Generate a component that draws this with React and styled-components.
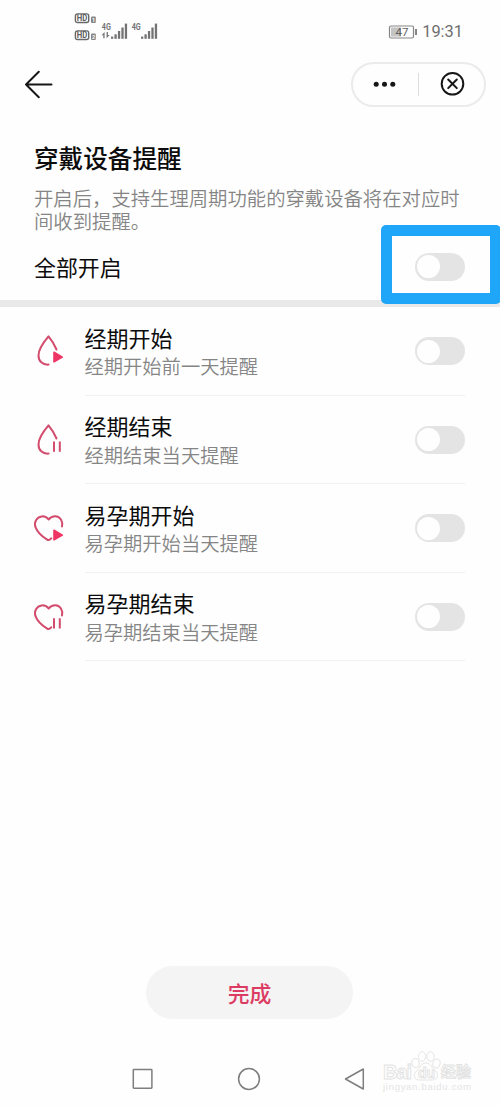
import React from "react";
import styled, { createGlobalStyle } from "styled-components";

const Global = createGlobalStyle`
  *, *::before, *::after { box-sizing: border-box; }
  body { margin: 0; background: #fefefe; }
`;

const Screen = styled.div`
  width: 500px;
  height: 1107px;
  display: flex;
  flex-direction: column;
  overflow: hidden;
  background: #fefefe;
  color: #0c0c0c;
  font-family: "Noto Sans CJK SC", sans-serif;
`;

const StatusBar = styled.header`
  height: 62px;
  flex: none;
  display: flex;
  justify-content: space-between;
  align-items: flex-start;
  padding: 12px 37px 0 74px;
`;

const Signals = styled.svg`
  display: block;
  width: 90px;
  height: 40px;
`;

const StatusRight = styled.div`
  display: flex;
  align-items: center;
  gap: 4px;
  height: 40px;
`;

const Battery = styled.svg`
  display: block;
  width: 30px;
  height: 16px;
`;

const Clock = styled.span`
  color: #6f6f6f;
  font: 400 16.4px/40px Roboto, sans-serif;
`;

const TopBar = styled.nav`
  height: 44px;
  flex: none;
  display: flex;
  align-items: center;
  justify-content: space-between;
  padding: 0 14px 0 24px;
`;

const BackIcon = styled.svg`
  display: block;
  width: 30px;
  height: 30px;
`;

const Capsule = styled.div`
  width: 135px;
  height: 45px;
  border: 2px solid #ebebeb;
  border-radius: 23px;
  display: flex;
  align-items: center;
`;

const CapsuleIcon = styled.svg`
  display: block;
  flex: 1;
  height: 30px;
`;

const CapsuleRule = styled.span`
  width: 1px;
  height: 23px;
  background: #dedede;
`;

const Intro = styled.section`
  height: 194px;
  flex: none;
  padding: 33px 35px 0 34px;
`;

const Title = styled.h1`
  margin: 0;
  font-size: 24.6px;
  line-height: 36px;
  font-weight: 500;
  white-space: nowrap;
`;

const Description = styled.p`
  margin: 12px 0 0;
  width: 430px;
  font-size: 19.35px;
  line-height: 23px;
  font-weight: 350;
  color: #858585;
`;

const AllRow = styled.div`
  height: 67px;
  display: flex;
  align-items: center;
  justify-content: space-between;
  font-size: 21.9px;
`;

const ToggleFrame = styled.div`
  position: relative;
  width: 50px;
  height: 28px;
  &::after {
    content: "";
    position: absolute;
    left: -34px;
    top: -28px;
    width: 120px;
    height: 79px;
    border: 11px solid #1fa6f8;
    border-radius: 5px;
  }
`;

const ToggleTrack = styled.span`
  display: flex;
  align-items: center;
  width: 50px;
  height: 28px;
  padding-left: 2px;
  border-radius: 14px;
  background: #e4e4e4;
  flex: none;
`;

const ToggleKnob = styled.span`
  width: 23px;
  height: 23px;
  border-radius: 50%;
  background: #fefefe;
`;

const SectionBand = styled.div`
  height: 7px;
  flex: none;
  background: #e9e9e9;
`;

const List = styled.ul`
  margin: 0;
  padding: 0 35px 0 34px;
  list-style: none;
`;

const Item = styled.li`
  height: 88.5px;
  display: flex;
  align-items: center;
`;

const ItemIcon = styled.svg`
  display: block;
  width: 32px;
  height: 34px;
  margin-right: 18.5px;
  flex: none;
  overflow: visible;
`;

const ItemBody = styled.div`
  flex: 1;
  height: 100%;
  display: flex;
  align-items: center;
  justify-content: space-between;
  padding-top: 1px;
  border-bottom: 1.5px solid #f1f1f1;
`;

const ItemName = styled.div`
  margin-top: 0.5px;
  font-size: 22px;
  line-height: 29px;
`;

const ItemHint = styled.div`
  margin-top: 1.5px;
  font-size: 19.3px;
  line-height: 27px;
  font-weight: 350;
  color: #858585;
`;

const Footer = styled.footer`
  margin-top: auto;
  height: 141px;
  position: relative;
  display: flex;
  flex-direction: column;
  align-items: center;
`;

const DoneButton = styled.button`
  width: 207px;
  height: 53px;
  margin-right: 1px;
  padding: 0;
  border: 0;
  border-radius: 27px;
  background: #f4f4f4;
  color: #dc3c64;
  font: 500 21.8px/53px "Noto Sans CJK SC", sans-serif;
`;

const SystemNav = styled.div`
  width: 100%;
  margin-top: 47px;
  padding: 0 134px 0 132px;
  display: flex;
  justify-content: space-between;
`;

const NavIcon = styled.svg`
  display: block;
  width: 24px;
  height: 26px;
  fill: none;
  stroke: #7e7e7e;
  stroke-width: 1.5;
  stroke-linejoin: round;
`;

const Watermark = styled.svg`
  position: absolute;
  left: 378px;
  top: 82px;
  width: 110px;
  height: 50px;
  fill: #fefefe;
  stroke: #e2e2e2;
  stroke-width: 0.9;
`;

function Toggle() {
  return (
    <ToggleTrack role="switch" aria-checked="false">
      <ToggleKnob />
    </ToggleTrack>
  );
}

function HdBadge({ y, sim }) {
  return (
    <g transform={`translate(0 ${y})`}>
      <rect x="1.4" y="1.4" width="13.3" height="8.6" rx="2" fill="none" stroke="#686868" strokeWidth="1.4" />
      <text x="2.8" y="8.9" fontSize="8.8" fontWeight="700" fill="#606060" textLength="10.5" lengthAdjust="spacingAndGlyphs">HD</text>
      <rect x="17" y="4" width="4.8" height="6.4" rx="1" fill="#858585" />
      <text x="18" y="9.2" fontSize="5.4" fontWeight="700" fill="#fff">{sim}</text>
    </g>
  );
}

function SignalBars({ x }) {
  return [2.2, 4.5, 7.8, 11.3, 15.2].map((h, i) => (
    <rect key={h} x={x + i * 3.45} y={26.8 - h} width="2.3" height={h} />
  ));
}

function StatusSignals() {
  return (
    <Signals viewBox="0 0 90 40" fill="#737373" fontFamily="Roboto, sans-serif">
      <HdBadge y={0.5} sim="1" />
      <HdBadge y={17.5} sim="2" />
      <text x="27.8" y="18" fontSize="9.4" fontWeight="700" textLength="9" lengthAdjust="spacingAndGlyphs">4G</text>
      <path d="M27.6 23.2l3-3.2v6.2h-1.3v-3zM35.6 23l-3 3.2v-6.2h1.3v3z" />
      <SignalBars x={37} />
      <text x="57.7" y="18" fontSize="9.4" fontWeight="700" textLength="9" lengthAdjust="spacingAndGlyphs">4G</text>
      <SignalBars x={67} />
    </Signals>
  );
}

function ReminderIcon({ shape, mark }) {
  const heart = shape === "heart";
  return (
    <ItemIcon viewBox="0 0 32 34" fill="none" stroke="#d34c6d" strokeWidth="2" strokeLinecap="round" strokeLinejoin="round">
      {heart ? (
        <path d="M28 15.5C29.2 10.5 26.2 5.4 21.4 5.3C18.5 5.2 16.3 6.4 14.6 8.5C12.8 6.1 10.6 5.1 7.7 5.4C2.6 6 -.4 11.4 1.6 16.3C3.4 21.1 8.5 25.6 12.8 28.4Q14.5 29.7 16.2 28.2L17.3 27.3" />
      ) : (
        <path d="M22.5 15.5C20.5 10.7 17.6 6.1 14.5 2.4C10 7.7 4.5 14.8 4.5 21.4C4.5 27.3 8.6 31 14.6 30.6" />
      )}
      {mark === "play" ? (
        <path
          transform={heart ? "translate(0 1)" : undefined}
          d="M20 18.3L28.3 23.1L20 27.8Z"
          fill="#ee3564"
          stroke="#ee3564"
          strokeWidth="1.6"
        />
      ) : (
        <path d={heart ? "M20 18.2v10.3M25.8 18.2v10.3" : "M20 18.5v10.3M25.8 18.5v10.3"} strokeLinecap="butt" />
      )}
    </ItemIcon>
  );
}

const reminders = [
  { name: "经期开始", hint: "经期开始前一天提醒", shape: "drop", mark: "play" },
  { name: "经期结束", hint: "经期结束当天提醒", shape: "drop", mark: "pause" },
  { name: "易孕期开始", hint: "易孕期开始当天提醒", shape: "heart", mark: "play" },
  { name: "易孕期结束", hint: "易孕期结束当天提醒", shape: "heart", mark: "pause" },
];

export default function App() {
  return (
    <Screen>
      <Global />
      <StatusBar>
        <StatusSignals />
        <StatusRight>
          <Battery viewBox="0 0 30 16">
            <rect x="1.5" y="2" width="24" height="12" rx="1.5" fill="none" stroke="#858585" strokeWidth="1.2" />
            <rect x="3" y="3.4" width="10" height="9.2" fill="#c4c4c4" />
            <rect x="27" y="5" width="2" height="6" fill="#858585" />
            <text x="7.6" y="12" fontSize="11.5" fill="#606060" fontFamily="Roboto, sans-serif">47</text>
          </Battery>
          <Clock>19:31</Clock>
        </StatusRight>
      </StatusBar>
      <TopBar>
        <BackIcon viewBox="0 0 30 30" fill="none" stroke="#161616" strokeWidth="2" strokeLinecap="round" strokeLinejoin="round">
          <path d="M27.5 15.5H2M14.8 2.8L2 15.5L14.8 28.3" />
        </BackIcon>
        <Capsule>
          <CapsuleIcon viewBox="0 0 60 30" fill="#161616">
            <circle cx="20.7" cy="15.3" r="2.5" />
            <circle cx="29" cy="15.3" r="2.5" />
            <circle cx="37.3" cy="15.3" r="2.5" />
          </CapsuleIcon>
          <CapsuleRule />
          <CapsuleIcon viewBox="0 0 60 30" fill="none" stroke="#161616" strokeWidth="2" strokeLinecap="round">
            <circle cx="31" cy="14.8" r="10.8" />
            <path d="M26.7 10.5l8.6 8.6M35.3 10.5l-8.6 8.6" />
          </CapsuleIcon>
        </Capsule>
      </TopBar>
      <Intro>
        <Title>穿戴设备提醒</Title>
        <Description>开启后，支持生理周期功能的穿戴设备将在对应时间收到提醒。</Description>
        <AllRow>
          <span>全部开启</span>
          <ToggleFrame><Toggle /></ToggleFrame>
        </AllRow>
      </Intro>
      <SectionBand />
      <List>
        {reminders.map((r) => (
          <Item key={r.name}>
            <ReminderIcon shape={r.shape} mark={r.mark} />
            <ItemBody>
              <div>
                <ItemName>{r.name}</ItemName>
                <ItemHint>{r.hint}</ItemHint>
              </div>
              <Toggle />
            </ItemBody>
          </Item>
        ))}
      </List>
      <Footer>
        <DoneButton>完成</DoneButton>
        <SystemNav>
          <NavIcon viewBox="0 0 24 26"><rect x="1.3" y="3.6" width="18.6" height="18.6" rx=".6" /></NavIcon>
          <NavIcon viewBox="0 0 24 26"><circle cx="12" cy="13" r="10.4" /></NavIcon>
          <NavIcon viewBox="0 0 24 26"><path d="M3.5 13L21.3 3V23Z" /></NavIcon>
        </SystemNav>
        <Watermark viewBox="0 0 110 50">
          <ellipse cx="37.5" cy="15" rx="3.6" ry="4.5" transform="rotate(-15 37.5 15)" />
          <ellipse cx="44" cy="8.500" rx="3.6" ry="4.8" />
          <ellipse cx="52.5" cy="8.500" rx="3.6" ry="4.8" />
          <ellipse cx="58.5" cy="15.5" rx="3.6" ry="4.5" transform="rotate(15 58.5 15.5)" />
          <path d="M48 15c-5 0-6 5-9.5 8c-4 4-2 9 3 9h13c5 0 7-5 3-9c-4-3-4.5-8-9.5-8z" />
          <text x="5" y="30.5" fontSize="20" fontWeight="700" fontFamily="Liberation Sans, sans-serif" textLength="29">Bai</text>
          <text x="40" y="29.5" fontSize="14" fontWeight="700" fontFamily="Liberation Sans, sans-serif">du</text>
          <text x="63" y="28.5" fontSize="15" fontWeight="700">经验</text>
          <text x="5" y="42" fontSize="9.5" fill="#e4e4e4" stroke="none" fontFamily="Liberation Sans, sans-serif" textLength="88">jingyan.baidu.com</text>
        </Watermark>
      </Footer>
    </Screen>
  );
}
